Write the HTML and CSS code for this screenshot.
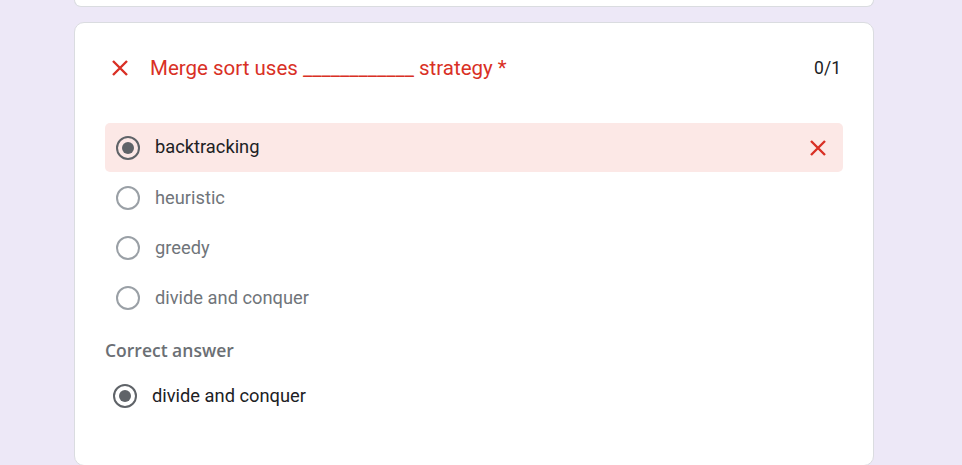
FILE: index.html
```html
<!DOCTYPE html>
<html>
<head>
<meta charset="utf-8">
<link rel="stylesheet" href="styles.css">
</head>
<body>
<div class="page">
  <div class="card card-prev"></div>
  <div class="card card-q">
    <div class="q-head">
      <svg class="x-icon" viewBox="0 0 16 16" width="16" height="16"><path d="M1 1L15 15M15 1L1 15" stroke="#d93025" stroke-width="2.4" fill="none"/></svg>
      <div class="q-title">Merge sort uses ____________ strategy *</div>
      <div class="q-score">0/1</div>
    </div>
    <div class="options">
      <div class="opt opt-wrong">
        <span class="radio checked"></span>
        <span class="opt-text selected">backtracking</span>
        <svg class="x-icon opt-x" viewBox="0 0 16 16" width="16" height="16"><path d="M1 1L15 15M15 1L1 15" stroke="#d93025" stroke-width="2.4" fill="none"/></svg>
      </div>
      <div class="opt">
        <span class="radio"></span>
        <span class="opt-text">heuristic</span>
      </div>
      <div class="opt">
        <span class="radio"></span>
        <span class="opt-text">greedy</span>
      </div>
      <div class="opt">
        <span class="radio"></span>
        <span class="opt-text">divide and conquer</span>
      </div>
    </div>
    <div class="correct-label">Correct answer</div>
    <div class="correct-opt">
      <span class="radio checked"></span>
      <span class="opt-text selected">divide and conquer</span>
    </div>
  </div>
</div>
</body>
</html>
```

FILE: styles.css
```css
html, body {
  margin: 0;
  padding: 0;
  background: #ede8f7;
  font-family: Roboto, "Liberation Sans", sans-serif;
  overflow: hidden;
}
.page {
  padding-left: 74px;
  width: 800px;
}
.card {
  background: #fff;
  border: 1px solid #dadce0;
  border-radius: 10px;
  box-sizing: border-box;
  width: 800px;
}
.card-prev {
  height: 7px;
  border-top: none;
  border-radius: 0 0 10px 10px;
}
.card-q {
  margin-top: 15px;
  padding: 30px 30px 0 30px;
  height: 444px;
}
.q-head {
  display: flex;
  align-items: center;
  height: 30px;
}
.x-icon {
  display: block;
  flex: none;
}
.q-head .x-icon {
  margin-left: 7px;
}
.q-title {
  margin-left: 22px;
  color: #d93025;
  font-size: 20.5px;
  flex: 1;
}
.q-score {
  color: #202124;
  font-size: 17.5px;
  margin-right: 2px;
}
.options {
  margin-top: 40px;
}
.opt {
  display: flex;
  align-items: center;
  height: 50px;
  padding-left: 11px;
  box-sizing: border-box;
}
.opt-wrong {
  background: #fce8e6;
  border-radius: 5px;
  height: 49px;
  margin-bottom: 1px;
}
.radio {
  width: 24px;
  height: 24px;
  border: 2px solid #9aa0a6;
  border-radius: 50%;
  box-sizing: border-box;
  flex: none;
  display: flex;
  align-items: center;
  justify-content: center;
}
.radio.checked {
  border-color: #5f6368;
}
.radio.checked::after {
  content: "";
  width: 12px;
  height: 12px;
  border-radius: 50%;
  background: #5f6368;
}
.opt-text {
  margin-left: 15px;
  font-size: 18.3px;
  line-height: 22px;
  margin-bottom: 1px;
  color: #70757a;
}
.opt-text.selected {
  color: #202124;
}
.opt-x {
  margin-left: auto;
  margin-right: 17px;
}
.correct-label {
  margin-top: 15px;
  height: 24px;
  line-height: 24px;
  font-family: "Open Sans", Roboto, sans-serif;
  font-size: 17.5px;
  font-weight: 600;
  color: #6b6f74;
}
.correct-opt {
  display: flex;
  align-items: center;
  height: 50px;
  margin-top: 9px;
  padding-left: 8px;
}
.correct-opt .opt-text {
  margin-left: 15px;
}
```
